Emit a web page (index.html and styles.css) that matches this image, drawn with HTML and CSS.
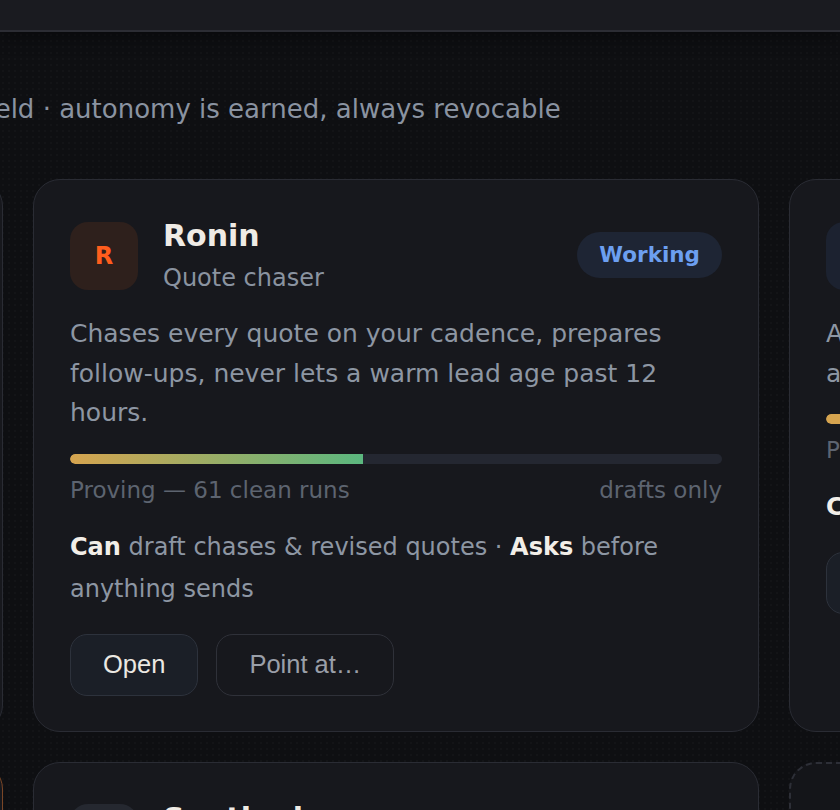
FILE: index.html
```html
<!DOCTYPE html>
<html lang="en">
<head>
    <meta charset="UTF-8">
    <meta name="viewport" content="width=device-width, initial-scale=1.0">
    <title>Crew</title>
    <link rel="stylesheet" href="styles.css">
</head>
<body>
    <div class="topbar"></div>

    <main class="crew">
        <p class="crew-sub">Proven in the field · autonomy is earned, always revocable</p>

        <div class="crew-grid">
            <!-- ligne 1 -->
            <div class="agent">
                <div class="agent-head">
                    <div class="avatar avatar-green">M</div>
                    <div class="agent-id">
                        <div class="agent-name">Mercer</div>
                        <div class="agent-role">Inbox triage</div>
                    </div>
                    <span class="badge">Working</span>
                </div>
                <p class="agent-desc">Sorts every inbound message, flags what matters and files the rest before you open the app.</p>
                <div class="trust"><div class="trust-fill" style="width: 70%"></div></div>
                <div class="trust-meta"><span>Trusted — 212 clean runs</span><span>sends replies</span></div>
                <p class="agent-scope"><b>Can</b> label, archive &amp; reply · <b>Asks</b> before deleting</p>
                <div class="agent-actions">
                    <button class="btn btn-open">Open</button>
                    <button class="btn btn-ghost">Point at…</button>
                </div>
            </div>

            <div class="agent">
                <div class="agent-head">
                    <div class="avatar avatar-orange">R</div>
                    <div class="agent-id">
                        <div class="agent-name">Ronin</div>
                        <div class="agent-role">Quote chaser</div>
                    </div>
                    <span class="badge">Working</span>
                </div>
                <p class="agent-desc">Chases every quote on your cadence, prepares follow-ups, never lets a warm lead age past 12 hours.</p>
                <div class="trust"><div class="trust-fill" style="width: 45%"></div></div>
                <div class="trust-meta"><span>Proving — 61 clean runs</span><span>drafts only</span></div>
                <p class="agent-scope"><b>Can</b> draft chases &amp; revised quotes · <b>Asks</b> before anything sends</p>
                <div class="agent-actions">
                    <button class="btn btn-open">Open</button>
                    <button class="btn btn-ghost">Point at…</button>
                </div>
            </div>

            <div class="agent">
                <div class="agent-head">
                    <div class="avatar avatar-blue">A</div>
                    <div class="agent-id">
                        <div class="agent-name">Atlas</div>
                        <div class="agent-role">Scheduler</div>
                    </div>
                    <span class="badge">Idle</span>
                </div>
                <p class="agent-desc">Arranges site visits around your calendar and crew availability.</p>
                <div class="trust"><div class="trust-fill trust-new" style="width: 12%"></div></div>
                <div class="trust-meta"><span>Probation — 9 clean runs</span><span>suggests only</span></div>
                <p class="agent-scope"><b>Can</b> propose slots · <b>Asks</b> always</p>
                <div class="agent-actions">
                    <button class="btn btn-open">Open</button>
                    <button class="btn btn-ghost">Point at…</button>
                </div>
            </div>

            <!-- ligne 2 -->
            <div class="agent agent-alert">
                <div class="agent-head">
                    <div class="avatar avatar-orange">B</div>
                    <div class="agent-id">
                        <div class="agent-name">Bramble</div>
                        <div class="agent-role">Invoice follow-up</div>
                    </div>
                </div>
            </div>

            <div class="agent">
                <div class="agent-head">
                    <div class="avatar avatar-grey">S</div>
                    <div class="agent-id">
                        <div class="agent-name">Sentinel</div>
                        <div class="agent-role">Review watcher</div>
                    </div>
                </div>
            </div>

            <div class="agent agent-add"></div>
        </div>
    </main>
</body>
</html>
```

FILE: styles.css
```css
/* Base */
body, html {
    margin: 0;
    padding: 0;
    background-color: #0e0f12;
    font-family: "DejaVu Sans", Verdana, sans-serif;
    overflow: hidden;
}

.topbar {
    height: 30px;
    background-color: #1a1b20;
    border-bottom: 2px solid #2c2d34;
    box-shadow: 0 4px 18px rgba(0, 0, 0, 0.45);
    position: relative;
    z-index: 2;
}

.crew {
    min-height: 800px;
    padding-top: 59px;
    background-image: radial-gradient(rgba(255, 255, 255, 0.018) 1px, transparent 1px);
    background-size: 6px 6px;
}

.crew-sub {
    margin: 0 0 52px -202px;
    font-size: 26px;
    line-height: 36px;
    color: #8a93a1;
    white-space: nowrap;
}

/* Grille des agents */
.crew-grid {
    display: grid;
    grid-template-columns: repeat(3, 726px);
    gap: 30px;
    margin-left: -723px;
}

.agent {
    background-color: #17181d;
    border: 1px solid #2a2c34;
    border-radius: 27px;
    padding: 36px 36px 35px;
    min-height: 400px;
}

.agent-alert {
    border-color: #7a4626;
}

.agent-add {
    background-color: #141519;
    border: 2px dashed #2d2f37;
}

.agent-head {
    display: flex;
    align-items: center;
    gap: 25px;
}

.avatar {
    width: 68px;
    height: 68px;
    border-radius: 18px;
    display: flex;
    align-items: center;
    justify-content: center;
    font-size: 24px;
    font-weight: bold;
    flex-shrink: 0;
}

.avatar-orange { background-color: #2e201c; color: #ff5d1d; }
.avatar-green  { background-color: #1b2a22; color: #5bb77f; }
.avatar-blue   { background-color: #1c2230; color: #6c9ff0; }
.avatar-grey   { background-color: #252830; color: #b8bcc4; }

.agent-id {
    flex: 1;
}

.agent-name {
    font-size: 30px;
    line-height: 40px;
    font-weight: bold;
    color: #efebe5;
}

.agent-role {
    margin-top: 5px;
    font-size: 24px;
    line-height: 34px;
    color: #8a93a0;
}

.badge {
    align-self: flex-start;
    margin-top: 16px;
    padding: 0 22px;
    height: 46px;
    line-height: 46px;
    border-radius: 23px;
    background-color: #1e2534;
    color: #6c9ff0;
    font-size: 21.5px;
    font-weight: bold;
}

.agent-desc {
    margin: 19px 0 0;
    font-size: 25px;
    line-height: 39.5px;
    color: #8d96a3;
}

/* Barre de confiance */
.trust {
    margin-top: 21px;
    height: 10px;
    border-radius: 5px;
    background-color: #242731;
    overflow: hidden;
}

.trust-fill {
    height: 100%;
    border-radius: 5px 0 0 5px;
    background: linear-gradient(90deg, #d6a44f, #5bb77f);
}

.trust-new {
    background: #d6a44f;
}

.trust-meta {
    display: flex;
    justify-content: space-between;
    margin-top: 9px;
    font-size: 23px;
    line-height: 34px;
    color: #5d6470;
}

.agent-scope {
    margin: 19px 0 0;
    font-size: 24px;
    line-height: 42px;
    color: #8d96a3;
}

.agent-scope b {
    color: #f2eee8;
}

/* Boutons */
.agent-actions {
    display: flex;
    gap: 18px;
    margin-top: 24px;
}

.btn {
    height: 62px;
    padding: 0 32px;
    border-radius: 17px;
    font-family: "Liberation Sans", Arial, sans-serif;
    font-size: 25.5px;
    cursor: pointer;
}

.btn-open {
    background-color: #1b1f27;
    border: 1px solid #2d323c;
    color: #ebe8e2;
}

.btn-ghost {
    background-color: transparent;
    border: 1px solid #2f3139;
    color: #9a9fa8;
}
```
